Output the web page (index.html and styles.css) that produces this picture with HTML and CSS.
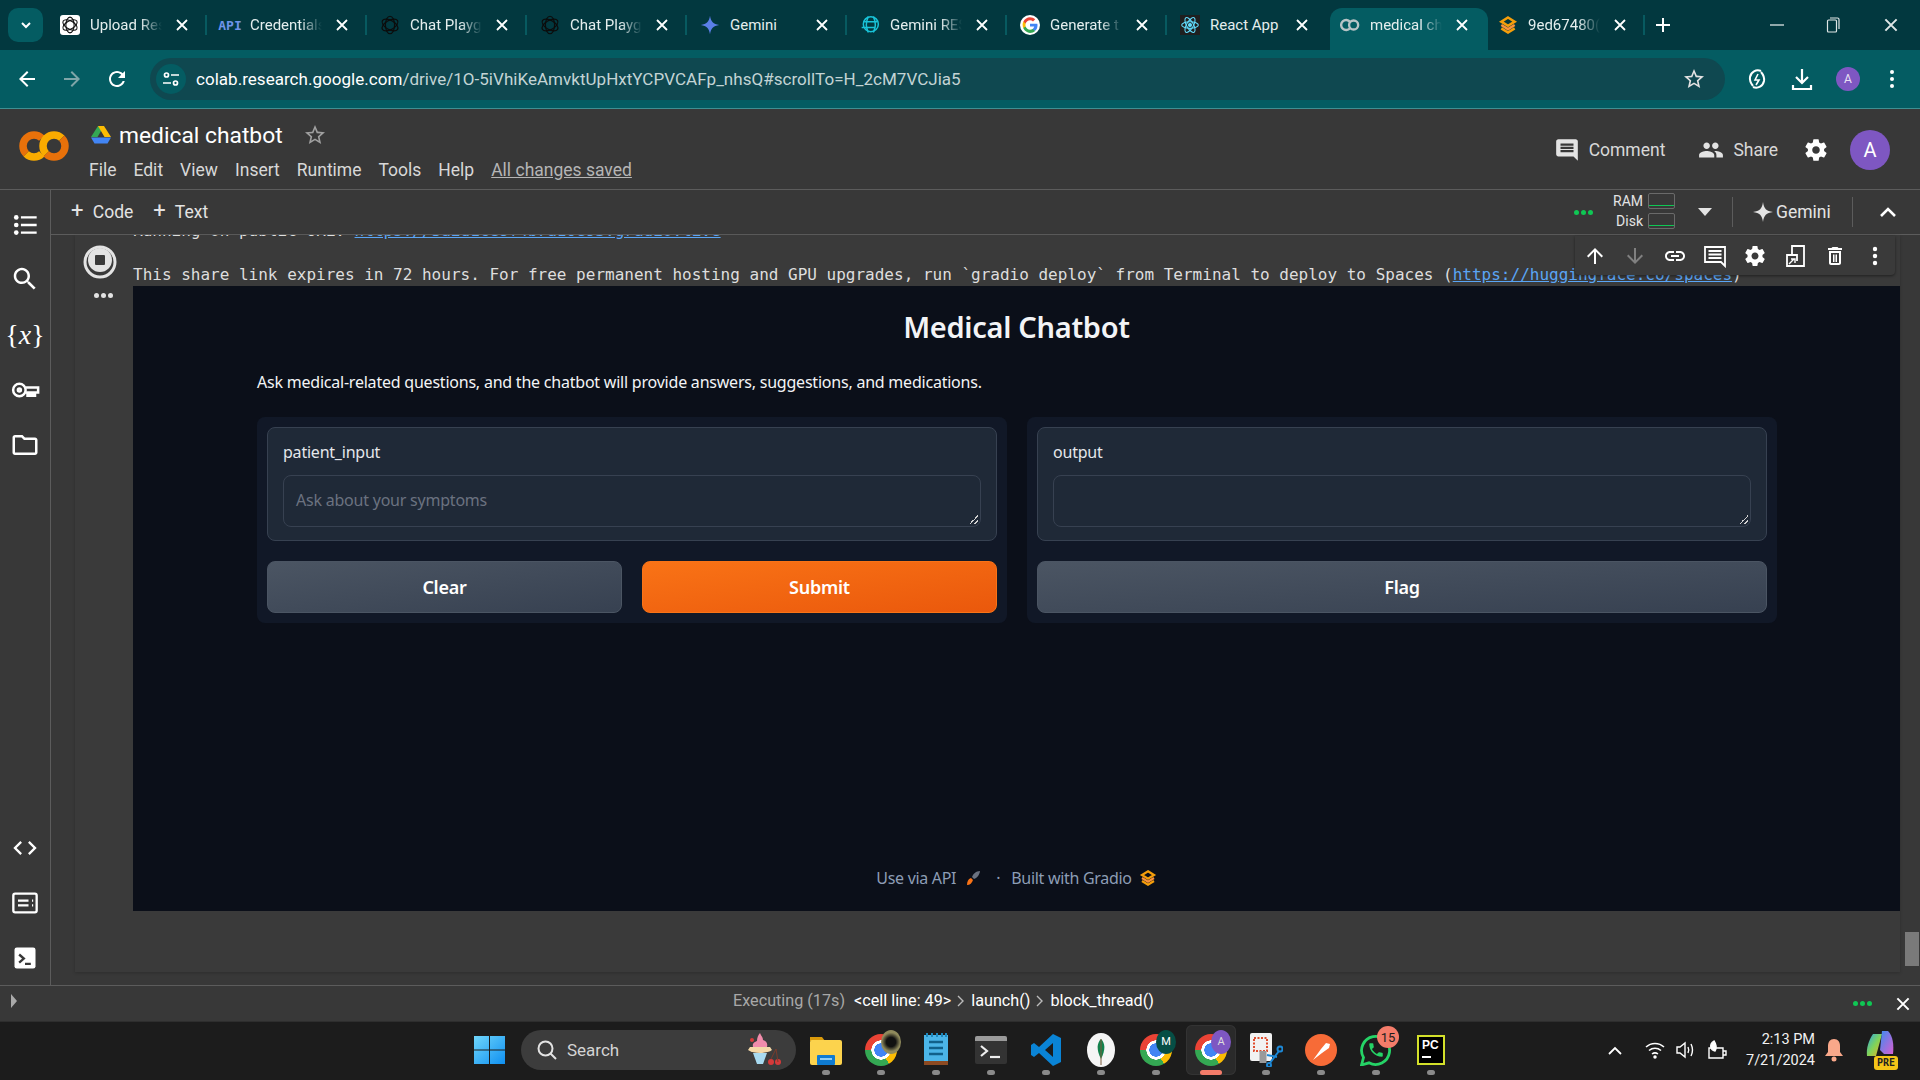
FILE: index.html
```html
<!DOCTYPE html>
<html lang="en">
  <head>
    <meta charset="UTF-8" />
    <title>medical chatbot - Colab</title>
    <link rel="stylesheet" href="styles.css">
  </head>

  <body>
    <!-- shared icons -->
    <svg class="defs" width="0" height="0">
      <defs>
        <symbol id="i-close" viewBox="0 0 16 16"><path d="M3 3l10 10M13 3L3 13" fill="none" stroke="currentColor" stroke-width="1.8"/></symbol>
        <symbol id="i-knot" viewBox="0 0 24 24"><g fill="none" stroke="currentColor" stroke-width="1.4"><ellipse cx="12" cy="12" rx="5.500" ry="10.500"/><ellipse cx="12" cy="12" rx="5.500" ry="10.500" transform="rotate(60 12 12)"/><ellipse cx="12" cy="12" rx="5.500" ry="10.500" transform="rotate(120 12 12)"/></g></symbol>
        <symbol id="i-gradio" viewBox="0 0 24 24"><g fill="none" stroke="#f59e0b" stroke-width="3"><path d="M12 3l8 5-8 5-8-5z"/><path d="M4 12l8 5 8-5" stroke="#fb923c"/><path d="M4 16l8 5 8-5"/></g></symbol>
        <symbol id="i-gear" viewBox="0 0 24 24"><path fill="currentColor" d="M19.43 12.98c.04-.32.07-.64.07-.98s-.03-.66-.07-.98l2.11-1.65c.19-.15.24-.42.12-.64l-2-3.46c-.12-.22-.39-.3-.61-.22l-2.49 1c-.52-.4-1.08-.73-1.69-.98l-.38-2.65C14.46 2.18 14.25 2 14 2h-4c-.25 0-.46.18-.49.42l-.38 2.65c-.61.25-1.17.59-1.69.98l-2.49-1c-.23-.09-.49 0-.61.22l-2 3.46c-.13.22-.07.49.12.64l2.11 1.65c-.04.32-.07.65-.07.98s.03.66.07.98l-2.11 1.65c-.19.15-.24.42-.12.64l2 3.46c.12.22.39.3.61.22l2.49-1c.52.4 1.08.73 1.69.98l.38 2.65c.03.24.24.42.49.42h4c.25 0 .46-.18.49-.42l.38-2.65c.61-.25 1.17-.59 1.69-.98l2.49 1c.23.09.49 0 .61-.22l2-3.46c.12-.22.07-.49-.12-.64l-2.11-1.65zM12 15.5c-1.93 0-3.5-1.57-3.5-3.5s1.57-3.5 3.5-3.5 3.5 1.57 3.5 3.5-1.57 3.5-3.5 3.5z"/></symbol>
        <symbol id="i-star" viewBox="0 0 24 24"><path fill="currentColor" d="M22 9.24l-7.19-.62L12 2 9.19 8.63 2 9.24l5.46 4.73L5.82 21 12 17.27 18.18 21l-1.63-7.03L22 9.24zM12 15.4l-3.76 2.27 1-4.28-3.32-2.88 4.38-.38L12 6.1l1.71 4.04 4.38.38-3.32 2.88 1 4.28L12 15.4z"/></symbol>
      </defs>
    </svg>

    <!-- browser tabs -->
    <div class="tabstrip">
      <button class="tab-search">
        <svg width="14" height="14" viewBox="0 0 14 14"><path d="M3 5l4 4 4-4" fill="none" stroke="#fff" stroke-width="2"/></svg>
      </button>
      <div class="tab">
        <span class="favicon favicon-white"><svg width="18" height="18" class="dark"><use href="#i-knot"/></svg></span>
        <span class="tab-title">Upload Res</span>
        <svg class="tab-close"><use href="#i-close"/></svg>
        <span class="tab-sep"></span>
      </div>
      <div class="tab">
        <span class="favicon favicon-api">API</span>
        <span class="tab-title">Credentials</span>
        <svg class="tab-close"><use href="#i-close"/></svg>
        <span class="tab-sep"></span>
      </div>
      <div class="tab">
        <span class="favicon"><svg width="22" height="22" class="dark"><use href="#i-knot"/></svg></span>
        <span class="tab-title">Chat Playg</span>
        <svg class="tab-close"><use href="#i-close"/></svg>
        <span class="tab-sep"></span>
      </div>
      <div class="tab">
        <span class="favicon"><svg width="22" height="22" class="dark"><use href="#i-knot"/></svg></span>
        <span class="tab-title">Chat Playg</span>
        <svg class="tab-close"><use href="#i-close"/></svg>
        <span class="tab-sep"></span>
      </div>
      <div class="tab">
        <span class="favicon">
          <svg width="20" height="20" viewBox="0 0 24 24"><path d="M12 1c1 7 4 10 11 11-7 1-10 4-11 11-1-7-4-10-11-11 7-1 10-4 11-11z" fill="#5b7fe8"/></svg>
        </span>
        <span class="tab-title tab-title-full">Gemini</span>
        <svg class="tab-close"><use href="#i-close"/></svg>
        <span class="tab-sep"></span>
      </div>
      <div class="tab">
        <span class="favicon">
          <svg width="22" height="22" viewBox="0 0 24 24" fill="none" stroke="#19c3d8" stroke-width="1.8"><circle cx="13" cy="11" r="9"/><path d="M2 15h16M5 8h16M10 2c-3 6-3 13 0 19M16 2c3 6 3 13 0 19"/></svg>
        </span>
        <span class="tab-title">Gemini RES</span>
        <svg class="tab-close"><use href="#i-close"/></svg>
        <span class="tab-sep"></span>
      </div>
      <div class="tab">
        <span class="favicon favicon-google">
          <svg width="18" height="18" viewBox="0 0 24 24"><path fill="#4285f4" d="M22 12.2c0-.7-.1-1.4-.2-2H12v3.900h5.600c-.2 1.300-1 2.400-2.100 3.100v2.600h3.400c2-1.800 3.100-4.500 3.100-7.600z"/><path fill="#34a853" d="M12 22.500c2.800 0 5.200-.9 6.900-2.500l-3.400-2.600c-.9.600-2.100 1-3.500 1-2.700 0-5-1.800-5.800-4.300H3.200v2.700c1.700 3.400 5.100 5.700 8.800 5.700z"/><path fill="#fbbc05" d="M6.200 14.100c-.4-1.300-.4-2.700 0-4V7.400H3.200c-1.400 2.700-1.400 6 0 8.700l3-2z"/><path fill="#ea4335" d="M12 5.800c1.500 0 2.900.5 4 1.600l3-3C17.200 2.600 14.700 1.500 12 1.500c-3.700 0-7.100 2.200-8.800 5.900l3 2.700C7 7.600 9.300 5.800 12 5.800z"/></svg>
        </span>
        <span class="tab-title">Generate t</span>
        <svg class="tab-close"><use href="#i-close"/></svg>
        <span class="tab-sep"></span>
      </div>
      <div class="tab">
        <span class="favicon favicon-react">
          <svg width="20" height="20" viewBox="0 0 24 24" fill="none" stroke="#61dafb" stroke-width="1.3"><ellipse cx="12" cy="12" rx="10" ry="4"/><ellipse cx="12" cy="12" rx="10" ry="4" transform="rotate(60 12 12)"/><ellipse cx="12" cy="12" rx="10" ry="4" transform="rotate(120 12 12)"/><circle cx="12" cy="12" r="1.800" fill="#61dafb"/></svg>
        </span>
        <span class="tab-title tab-title-full">React App</span>
        <svg class="tab-close"><use href="#i-close"/></svg>
      </div>
      <div class="tab tab-active">
        <span class="favicon">
          <svg width="22" height="14" viewBox="0 0 22 14" fill="none" stroke="#b8c4c6" stroke-width="2.600"><path d="M11 3.500a5.500 5.500 0 1 0 0 7"/><circle cx="15" cy="7" r="5"/></svg>
        </span>
        <span class="tab-title">medical ch</span>
        <svg class="tab-close"><use href="#i-close"/></svg>
      </div>
      <div class="tab">
        <span class="favicon"><svg width="20" height="20"><use href="#i-gradio"/></svg></span>
        <span class="tab-title">9ed67480(</span>
        <svg class="tab-close"><use href="#i-close"/></svg>
        <span class="tab-sep"></span>
      </div>
      <svg class="tab-new" width="18" height="18" viewBox="0 0 18 18"><path d="M9 2v14M2 9h14" stroke="#fff" stroke-width="2"/></svg>
      <div class="win-controls">
        <svg width="14" height="14" viewBox="0 0 14 14"><path d="M0 7h14" stroke="#dfe6e6" stroke-width="1.300"/></svg>
        <svg width="14" height="16" viewBox="0 0 14 16" fill="none" stroke="#dfe6e6" stroke-width="1.200"><rect x="1.500" y="3" width="9" height="12" rx="1"/><path d="M4 1h7.500a1.500 1.500 0 0 1 1.500 1.500V12"/></svg>
        <svg width="18" height="18"><use href="#i-close"/></svg>
      </div>
    </div>

    <!-- address bar -->
    <div class="toolbar">
      <svg class="nav-icon" viewBox="0 0 24 24"><path fill="#fff" d="M20 11H7.830l5.590-5.590L12 4l-8 8 8 8 1.410-1.410L7.830 13H20v-2z"/></svg>
      <svg class="nav-icon" viewBox="0 0 24 24"><path fill="#7fa5a8" d="M12 4l-1.410 1.410L16.170 11H4v2h12.170l-5.580 5.590L12 20l8-8z"/></svg>
      <svg class="nav-icon" viewBox="0 0 24 24"><path fill="#fff" d="M17.650 6.350C16.200 4.900 14.210 4 12 4c-4.420 0-7.990 3.580-7.990 8s3.570 8 7.990 8c3.730 0 6.840-2.550 7.730-6h-2.080c-.82 2.330-3.040 4-5.650 4-3.310 0-6-2.690-6-6s2.690-6 6-6c1.660 0 3.140.69 4.220 1.780L13 11h7V4l-2.350 2.350z"/></svg>
      <div class="omnibox">
        <span class="site-info">
          <svg width="18" height="18" viewBox="0 0 18 18" fill="none" stroke="#fff" stroke-width="1.700"><circle cx="4.500" cy="5" r="2"/><path d="M9 5h8M1 13h8"/><circle cx="13.500" cy="13" r="2"/></svg>
        </span>
        <span class="url">colab.research.google.com<span class="url-path">/drive/1O-5iVhiKeAmvktUpHxtYCPVCAFp_nhsQ#scrollTo=H_2cM7VCJia5</span></span>
        <svg class="url-star" width="24" height="24"><use href="#i-star"/></svg>
      </div>
      <div class="toolbar-right">
        <svg width="22" height="24" viewBox="0 0 22 24" fill="none" stroke="#fff" stroke-width="2"><path d="M15 4c-5-2-10 1-11 6-.5 3 .5 6 3 9M7 20c5 2 10-1 11-6 .5-3-.5-6-3-9"/><path d="M12 7l-3 6h4l-3 5" stroke-width="1.600"/></svg>
        <svg width="22" height="24" viewBox="0 0 22 24" fill="none" stroke="#fff" stroke-width="2.200"><path d="M11 2v13M5 10l6 6 6-6M2 18v4h18v-4"/></svg>
        <span class="avatar-small">A</span>
        <svg class="more-vert" width="6" height="20" viewBox="0 0 6 20" fill="#fff"><circle cx="3" cy="3" r="2"/><circle cx="3" cy="10" r="2"/><circle cx="3" cy="17" r="2"/></svg>
      </div>
    </div>

    <!-- colab header -->
    <header class="colab-header">
      <svg class="colab-logo" width="50" height="30" viewBox="0 0 50 30" fill="none" stroke-width="7.500">
        <path d="M22.780 7.220A11 11 0 0 0 7.220 22.780" stroke="#e8710a"/>
        <path d="M7.220 22.780A11 11 0 0 0 22.780 22.780" stroke="#f9ab00"/>
        <path d="M27.220 22.780A11 11 0 0 1 42.780 7.220" stroke="#f9ab00"/>
        <path d="M42.780 7.220A11 11 0 0 1 27.220 22.780" stroke="#e8710a"/>
      </svg>
      <div class="doc-info">
        <div class="doc-title-row">
          <svg width="20" height="18" viewBox="0 0 20 18"><path d="M7 0h6l-6.500 11H0z" fill="#34a853"/><path d="M7 0h6l7 11h-6.500z" fill="#fbbc04"/><path d="M3.500 17.500L0 11.500h20l-3.500 6z" fill="#4285f4"/></svg>
          <span class="doc-title">medical chatbot</span>
          <svg class="doc-star" width="24" height="24"><use href="#i-star"/></svg>
        </div>
        <nav class="menu">
          <a>File</a><a>Edit</a><a>View</a><a>Insert</a><a>Runtime</a><a>Tools</a><a>Help</a>
          <a class="saved">All changes saved</a>
        </nav>
      </div>
      <div class="header-actions">
        <span class="header-btn">
          <svg width="26" height="26" viewBox="0 0 24 24"><path fill="#e3e3e3" d="M21.990 4c0-1.100-.89-2-1.990-2H4c-1.100 0-2 .9-2 2v12c0 1.100.9 2 2 2h14l4 4-.01-18zM18 14H6v-2h12v2zm0-3H6V9h12v2zm0-3H6V6h12v2z"/></svg>
          Comment
        </span>
        <span class="header-btn">
          <svg width="26" height="26" viewBox="0 0 24 24"><path fill="#e3e3e3" d="M16 11c1.660 0 2.990-1.340 2.990-3S17.660 5 16 5c-1.660 0-3 1.340-3 3s1.340 3 3 3zm-8 0c1.660 0 2.990-1.340 2.990-3S9.660 5 8 5C6.340 5 5 6.340 5 8s1.340 3 3 3zm0 2c-2.330 0-7 1.170-7 3.500V19h14v-2.500c0-2.330-4.670-3.500-7-3.500zm8 0c-.29 0-.62.02-.97.05 1.160.84 1.970 1.970 1.970 3.450V19h6v-2.500c0-2.330-4.670-3.500-7-3.500z"/></svg>
          Share
        </span>
        <svg class="header-gear" width="26" height="26"><use href="#i-gear"/></svg>
        <span class="avatar">A</span>
      </div>
    </header>

    <div class="workspace">
      <!-- left sidebar -->
      <aside class="sidebar">
        <div class="side-group">
          <svg width="28" height="28" viewBox="0 0 24 24" fill="#fff"><circle cx="4.500" cy="5.500" r="2"/><circle cx="4.500" cy="12" r="2"/><circle cx="4.500" cy="18.500" r="2"/><path d="M8.500 4.500H22v2H8.500zM8.500 11H22v2H8.500zM8.500 17.500H22v2H8.500z"/></svg>
          <svg width="30" height="30" viewBox="0 0 24 24"><path fill="#fff" d="M15.500 14h-.79l-.28-.27C15.410 12.590 16 11.110 16 9.500 16 5.910 13.090 3 9.500 3S3 5.910 3 9.500 5.910 16 9.500 16c1.610 0 3.090-.59 4.230-1.570l.27.28v.79l5 4.990L20.490 19l-4.990-5zm-6 0C7.010 14 5 11.990 5 9.500S7.010 5 9.500 5 14 7.010 14 9.500 11.990 14 9.500 14z"/></svg>
          <span class="side-vars">{<i>x</i>}</span>
          <svg width="30" height="30" viewBox="0 0 24 24" fill="none" stroke="#fff" stroke-width="2"><circle cx="7.500" cy="12" r="5"/><circle cx="7.500" cy="12" r="1.200"/><path d="M12.500 10H22.500v4H20v2.500h-2V14h-2v2.500h-2V14h-1.500"/></svg>
          <svg width="30" height="30" viewBox="0 0 24 24"><path fill="#fff" d="M20 6h-8l-2-2H4c-1.100 0-1.990.9-1.990 2L2 18c0 1.100.9 2 2 2h16c1.100 0 2-.9 2-2V8c0-1.100-.9-2-2-2zm0 12H4V6h5.170l2 2H20v10z"/></svg>
        </div>
        <div class="side-group side-bottom">
          <svg width="28" height="28" viewBox="0 0 24 24"><path fill="#fff" d="M9.400 16.600L4.800 12l4.600-4.600L8 6l-6 6 6 6 1.400-1.400zm5.200 0l4.600-4.600-4.600-4.600L16 6l6 6-6 6-1.400-1.400z"/></svg>
          <svg width="28" height="28" viewBox="0 0 24 24" fill="none" stroke="#fff" stroke-width="2"><rect x="2" y="4" width="20" height="16" rx="1.500"/><path d="M6 10h9M6 14h9M18 10h1M18 14h1"/></svg>
          <svg width="28" height="28" viewBox="0 0 24 24"><rect x="3" y="3" width="18" height="18" rx="2" fill="#fff"/><path d="M7 9l4 3.500L7 16M12 17h5" fill="none" stroke="#383838" stroke-width="2"/></svg>
        </div>
      </aside>

      <main class="notebook-area">
        <!-- + Code / + Text -->
        <div class="nb-toolbar">
          <span class="add-btn"><b>+</b> Code</span>
          <span class="add-btn"><b>+</b> Text</span>
          <div class="nb-status">
            <span class="dots-green"><i></i><i></i><i></i></span>
            <div class="res-meters">
              <div class="meter-row"><span>RAM</span><span class="meter"><em></em></span></div>
              <div class="meter-row"><span>Disk</span><span class="meter"><em></em></span></div>
            </div>
            <svg class="caret" width="14" height="8" viewBox="0 0 14 8"><path d="M0 0h14L7 8z" fill="#e3e3e3"/></svg>
            <span class="bar-sep"></span>
            <span class="gemini-btn">
              <svg width="20" height="20" viewBox="0 0 24 24"><path d="M12 0c1 8 4 11 12 12-8 1-11 4-12 12-1-8-4-11-12-12 8-1 11-4 12-12z" fill="#e3e3e3"/></svg>
              Gemini
            </span>
            <span class="bar-sep"></span>
            <svg class="chev-up" width="18" height="12" viewBox="0 0 18 12"><path d="M2 10l7-7 7 7" fill="none" stroke="#fff" stroke-width="2.600"/></svg>
          </div>
        </div>

        <div class="notebook">
          <div class="cell">
            <div class="cell-gutter">
              <svg width="34" height="34" viewBox="0 0 34 34"><circle cx="17" cy="17" r="15" fill="none" stroke="#e3e3e3" stroke-width="3"/><circle cx="17" cy="15" r="12" fill="#e3e3e3"/><rect x="12" y="10" width="10" height="10" rx="1" fill="#3a3a3a"/></svg>
              <span class="cell-more"><i></i><i></i><i></i></span>
            </div>
            <div class="cell-output">
              <pre class="out-text">Running on public URL: <a>https://5a2d1ce8f4b7a10e93.gradio.live</a>

This share link expires in 72 hours. For free permanent hosting and GPU upgrades, run `gradio deploy` from Terminal to deploy to Spaces (<a>https://huggingface.co/spaces</a>)</pre>

              <!-- gradio app -->
              <div class="gradio">
                <h1 class="gr-title">Medical Chatbot</h1>
                <p class="gr-desc">Ask medical-related questions, and the chatbot will provide answers, suggestions, and medications.</p>
                <div class="gr-row">
                  <section class="gr-panel">
                    <div class="gr-field">
                      <label class="gr-label">patient_input</label>
                      <div class="gr-textbox gr-placeholder">Ask about your symptoms<span class="grip"></span></div>
                    </div>
                    <div class="gr-buttons">
                      <button class="gr-btn">Clear</button>
                      <button class="gr-btn gr-btn-primary">Submit</button>
                    </div>
                  </section>
                  <section class="gr-panel">
                    <div class="gr-field">
                      <label class="gr-label">output</label>
                      <div class="gr-textbox"><span class="grip"></span></div>
                    </div>
                    <div class="gr-buttons">
                      <button class="gr-btn">Flag</button>
                    </div>
                  </section>
                </div>
                <footer class="gr-footer">
                  <span>Use via API</span>
                  <svg width="16" height="16" viewBox="0 0 16 16"><path d="M2 15c0-3 1-6 4-7l2 2c-1 3-3 5-6 5z" fill="#f97316"/><path d="M7 7c1-3 4-6 8-6-.5 4-3 7-6 8z" fill="#6b7280"/></svg>
                  <span class="gr-dot">·</span>
                  <span>Built with Gradio</span>
                  <svg class="gr-logo" width="18" height="18"><use href="#i-gradio"/></svg>
                </footer>
              </div>
            </div>
          </div>
          <div class="scrollbar"><span class="scroll-thumb"></span></div>

          <!-- cell actions, floats over the output -->
          <div class="cell-actions">
            <svg viewBox="0 0 24 24"><path fill="#fff" d="M4 12l1.410 1.410L11 7.830V20h2V7.830l5.580 5.590L20 12l-8-8z"/></svg>
            <svg viewBox="0 0 24 24"><path fill="#808080" d="M20 12l-1.410-1.410L13 16.170V4h-2v12.170l-5.580-5.590L4 12l8 8z"/></svg>
            <svg viewBox="0 0 24 24"><path fill="#fff" d="M3.900 12c0-1.710 1.390-3.100 3.100-3.100h4V7H7c-2.760 0-5 2.240-5 5s2.240 5 5 5h4v-1.900H7c-1.710 0-3.100-1.390-3.100-3.100zM8 13h8v-2H8v2zm9-6h-4v1.900h4c1.710 0 3.100 1.390 3.100 3.100s-1.390 3.100-3.100 3.100h-4V17h4c2.760 0 5-2.240 5-5s-2.240-5-5-5z"/></svg>
            <svg viewBox="0 0 24 24" fill="none" stroke="#fff" stroke-width="1.800"><path d="M2 3h20v19l-4-4H2z"/><path d="M5.500 7h13M5.500 10.500h13M5.500 14h13"/></svg>
            <svg class="white"><use href="#i-gear"/></svg>
            <svg viewBox="0 0 24 24" fill="none" stroke="#fff" stroke-width="1.800"><path d="M9 11V2h12v20H4V11h10v6"/><path d="M6 20l5-5M8 15h4v4" stroke-width="1.400"/></svg>
            <svg viewBox="0 0 24 24"><path fill="#fff" d="M6 19c0 1.100.9 2 2 2h8c1.100 0 2-.9 2-2V7H6v12zM8 9h8v10H8V9zm2 1.500h1.500V18H10zm2.500 0H14V18h-1.500zM15.500 4l-1-1h-5l-1 1H5v2h14V4z"/></svg>
            <svg viewBox="0 0 24 24" fill="#fff"><circle cx="12" cy="5" r="2.200"/><circle cx="12" cy="12" r="2.200"/><circle cx="12" cy="19" r="2.200"/></svg>
          </div>
        </div>
      </main>
    </div>

    <!-- execution status -->
    <div class="statusbar">
      <svg class="status-arrow" width="8" height="14" viewBox="0 0 8 14"><path d="M1 0l6 7-6 7z" fill="#aaa"/></svg>
      <div class="status-text">
        <span class="status-muted">Executing (17s)</span>
        <span>&lt;cell line: 49&gt;</span>
        <svg width="8" height="12" viewBox="0 0 8 12"><path d="M1 1l5 5-5 5" fill="none" stroke="#bbb" stroke-width="1.400"/></svg>
        <span>launch()</span>
        <svg width="8" height="12" viewBox="0 0 8 12"><path d="M1 1l5 5-5 5" fill="none" stroke="#bbb" stroke-width="1.400"/></svg>
        <span>block_thread()</span>
      </div>
      <span class="dots-green status-dots"><i></i><i></i><i></i></span>
      <svg class="status-close" width="18" height="18"><use href="#i-close"/></svg>
    </div>

    <!-- windows taskbar -->
    <div class="taskbar">
      <svg class="start" width="31" height="30" viewBox="0 0 31 30">
        <defs><linearGradient id="win" x1="0" y1="0" x2="1" y2="1"><stop offset="0" stop-color="#6fd6fb"/><stop offset="1" stop-color="#0f8ff0"/></linearGradient></defs>
        <path d="M0 1h15v13.500H0zM16 1h15v13.500H16zM0 15.500h15V29H0zM16 15.500h15V29H16z" fill="url(#win)"/>
      </svg>
      <div class="task-search">
        <svg width="22" height="22" viewBox="0 0 22 22" fill="none" stroke="#e3e3e3" stroke-width="2"><circle cx="9.500" cy="9.500" r="7"/><path d="M14.500 14.500l5.500 5.500"/></svg>
        <span>Search</span>
        <svg class="cupcake" width="36" height="36" viewBox="0 0 36 36">
          <path d="M8 21l4 11h6l4-11z" fill="#a8daf0"/>
          <path d="M3 18c5 4 19 4 24 0l-2-3H5z" fill="#f5d9a8"/>
          <path d="M8 15c-1-4 2-5 4-6 0-3 1-6 3-8 1 3 3 4 3 7 3 1 5 3 4 7z" fill="#f08cab"/>
          <circle cx="7" cy="8" r="2" fill="#d63a3a"/>
          <circle cx="26" cy="30" r="3" fill="#d63a3a"/><circle cx="33" cy="30" r="3" fill="#d63a3a"/>
          <path d="M26 27l5-10 2 13" fill="none" stroke="#7a3b2b"/>
        </svg>
      </div>
      <div class="task-apps">
        <span class="task-app">
          <svg width="32" height="32" viewBox="0 0 32 32"><path d="M0 3h12l3 4h-15z" fill="#d99a0b"/><rect y="6" width="32" height="25" rx="2" fill="#fcd34d"/><rect x="7" y="21" width="18" height="10" rx="1" fill="#0f7bd1"/><rect x="10" y="24" width="12" height="2" fill="#8ecdf7"/></svg>
          <i></i>
        </span>
        <span class="task-app">
          <span class="chrome"><span class="chrome-badge badge-photo"></span></span>
          <i></i>
        </span>
        <span class="task-app">
          <svg width="24" height="36" viewBox="0 0 24 36"><rect y="3" width="24" height="29" fill="#4bb5e8"/><rect y="29" width="24" height="4" fill="#8c4a22"/><path d="M5 10h14M5 16h14M5 22h14" stroke="#11608a" stroke-width="2.500"/><path d="M3 1v4M8 1v4M13 1v4M18 1v4M22 1v4" stroke="#1d88bd" stroke-width="2"/></svg>
          <i></i>
        </span>
        <span class="task-app">
          <svg width="32" height="28" viewBox="0 0 32 28"><rect width="32" height="28" rx="2" fill="#333"/><path d="M0 2a2 2 0 0 1 2-2h28a2 2 0 0 1 2 2v3H0z" fill="#9a9a9a"/><path d="M6 10l6 5-6 5" fill="none" stroke="#eee" stroke-width="2.200"/><path d="M15 21h10" stroke="#eee" stroke-width="2.200"/></svg>
          <i></i>
        </span>
        <span class="task-app">
          <svg width="30" height="32" viewBox="0 0 30 32"><path d="M22 0l8 4v24l-8 4-14-13-5 4-3-2v-10l3-2 5 4zM22 9l-8 7 8 7z" fill="#0a84d6"/></svg>
          <i></i>
        </span>
        <span class="task-app">
          <svg width="30" height="34" viewBox="0 0 30 34"><ellipse cx="15" cy="17" rx="14" ry="17" fill="#f5f5f5"/><path d="M15 6c4 4 5 10 0 20-5-10-4-16 0-20z" fill="#13814c"/><path d="M15 6v26" stroke="#7a5b3a"/></svg>
          <i></i>
        </span>
        <span class="task-app">
          <span class="chrome"><span class="chrome-badge badge-m">M</span></span>
          <i></i>
        </span>
        <span class="task-app task-app-active">
          <span class="chrome"><span class="chrome-badge badge-a">A</span></span>
          <i></i>
        </span>
        <span class="task-app">
          <svg width="34" height="34" viewBox="0 0 34 34"><rect x="1" width="22" height="28" rx="2" fill="#f2f2f2"/><rect x="5" y="5" width="13" height="13" fill="none" stroke="#e04e2f" stroke-width="2" stroke-dasharray="2 1.500"/><path d="M14 18v12" stroke="#9a9a9a" stroke-width="7"/><circle cx="31" cy="16" r="2.500" fill="none" stroke="#1d88d6" stroke-width="2"/><circle cx="20" cy="32" r="2" fill="none" stroke="#1d88d6" stroke-width="2"/><path d="M30 18l-9 12M18 22l10 2" stroke="#1d88d6" stroke-width="2"/></svg>
          <i></i>
        </span>
        <span class="task-app">
          <svg width="32" height="32" viewBox="0 0 32 32"><circle cx="16" cy="16" r="16" fill="#f76b37"/><path d="M8 26l8-11 5-6 4 1-1 4-7 5z" fill="#fff"/></svg>
          <i></i>
        </span>
        <span class="task-app">
          <svg width="32" height="32" viewBox="0 0 32 32"><path d="M1.500 31l2-7.500A14 14 0 1 1 9 28.800z" fill="none" stroke="#25d366" stroke-width="2.800"/><g transform="translate(7 7) scale(.75)"><path fill="#25d366" d="M6.620 10.790c1.440 2.830 3.760 5.140 6.590 6.590l2.200-2.200c.27-.27.67-.36 1.020-.24 1.120.37 2.330.57 3.570.57.55 0 1 .45 1 1V20c0 .55-.45 1-1 1-9.390 0-17-7.610-17-17 0-.55.45-1 1-1h3.500c.55 0 1 .45 1 1 0 1.250.2 2.450.57 3.570.11.350.03.74-.25 1.020l-2.200 2.200z"/></g></svg>
          <span class="wa-badge">15</span>
          <i></i>
        </span>
        <span class="task-app">
          <span class="pycharm">PC<u></u></span>
          <i></i>
        </span>
      </div>
      <div class="tray">
        <svg class="tray-chev" width="16" height="10" viewBox="0 0 16 10"><path d="M2 9l6-6 6 6" fill="none" stroke="#fff" stroke-width="1.800"/></svg>
        <svg width="20" height="18" viewBox="0 0 20 18" fill="none" stroke="#fff" stroke-width="1.500"><path d="M1 6a13 13 0 0 1 18 0M4 9.500a9 9 0 0 1 12 0M7 13a5 5 0 0 1 6 0"/><circle cx="10" cy="16" r="1" fill="#fff"/></svg>
        <svg width="20" height="20" viewBox="0 0 20 20" fill="none" stroke="#fff" stroke-width="1.400"><path d="M2 7v6h3l5 4V3L5 7z"/><path d="M13 7c1 2 1 4 0 6M16 4c2 4 2 8 0 12"/></svg>
        <svg width="22" height="20" viewBox="0 0 22 20" fill="none" stroke="#fff" stroke-width="1.400"><path d="M4 8h14v10H4zM18 11h3v4h-3"/><path d="M9 1c-5 3-4 9 1 10 2-3 1-7-1-10z" fill="#fff"/></svg>
        <div class="clock"><span>2:13 PM</span><span>7/21/2024</span></div>
        <svg width="18" height="24" viewBox="0 0 18 24"><path d="M9 1c-4 0-6 3-6 7v6l-3 4h18l-3-4V8c0-4-2-7-6-7z" fill="#f9a88a"/><circle cx="9" cy="21" r="2.500" fill="#f9a88a"/></svg>
        <span class="copilot">
          <svg width="32" height="32" viewBox="0 0 32 32"><defs><linearGradient id="cop" x1="0" y1="0" x2="1" y2="1"><stop offset="0" stop-color="#2aa7e8"/><stop offset=".5" stop-color="#7fd35a"/><stop offset="1" stop-color="#f0b21e"/></linearGradient><linearGradient id="cop2" x1="0" y1="0" x2="1" y2="1"><stop offset="0" stop-color="#3b8cf0"/><stop offset="1" stop-color="#d85fd2"/></linearGradient></defs><path d="M9 4h9l-6 22H3c-1-8 2-16 6-22z" fill="url(#cop)"/><path d="M18 1h6c5 5 6 14 5 23h-9l-4-4z" fill="url(#cop2)"/></svg>
          <span class="pre">PRE</span>
        </span>
      </div>
    </div>
  </body>
</html>
```

FILE: styles.css
```css
* {
  box-sizing: border-box;
}

body {
  margin: 0;
  width: 1920px;
  height: 1080px;
  overflow: hidden;
  display: flex;
  flex-direction: column;
  background-color: #383838;
  font-family: Roboto, "Liberation Sans", sans-serif;
  color: #e3e3e3;
}

.defs {
  position: absolute;
}

.dark {
  color: #0c0c0c;
}

/* browser tabs */
.tabstrip {
  height: 50px;
  flex: none;
  display: flex;
  align-items: flex-start;
  padding: 8px 0 0 8px;
  background-color: #02383f;
}

.tab-search {
  width: 35px;
  height: 34px;
  margin-right: 7px;
  border: none;
  border-radius: 10px;
  background-color: #045c62;
  display: flex;
  align-items: center;
  justify-content: center;
}

.tab {
  width: 160px;
  height: 42px;
  padding: 0 0 8px 10px;
  display: flex;
  align-items: center;
  font-size: 15px;
  color: #e4eeee;
}

.tab-active {
  width: 158px;
  background-color: #045c62;
  border-radius: 12px 12px 0 0;
}

.favicon {
  width: 20px;
  height: 20px;
  flex: none;
  margin-right: 10px;
  display: flex;
  align-items: center;
  justify-content: center;
}

.favicon-white {
  background-color: #fff;
  border-radius: 3px;
}

.favicon-api {
  font-family: "DejaVu Sans Mono", monospace;
  font-size: 13px;
  font-weight: 700;
  color: #6f93e8;
}

.favicon-google {
  background-color: #fff;
  border-radius: 50%;
}

.favicon-react {
  background-color: #1f1f1f;
}

.tab-title {
  width: 72px;
  flex: none;
  white-space: nowrap;
  -webkit-mask-image: linear-gradient(to right, #000 70%, transparent);
  mask-image: linear-gradient(to right, #000 70%, transparent);
}

.tab-title-full {
  -webkit-mask-image: none;
  mask-image: none;
}

.tab-close {
  width: 16px;
  height: 16px;
  margin-left: 12px;
  flex: none;
  color: #fff;
}

.tab-sep {
  width: 2px;
  height: 20px;
  margin-left: 15px;
  background-color: #075a60;
}

.tab-new {
  margin: 8px 0 0 6px;
}

.win-controls {
  margin-left: auto;
  width: 150px;
  padding-right: 20px;
  height: 34px;
  display: flex;
  align-items: center;
  justify-content: space-between;
  color: #dfe6e6;
}

/* address bar */
.toolbar {
  height: 59px;
  flex: none;
  display: flex;
  align-items: center;
  padding: 0 0 1px 15px;
  gap: 21px;
  background-color: #045c62;
  border-bottom: 1px solid #3f8f92;
}

.nav-icon {
  width: 24px;
  height: 24px;
  flex: none;
}

.omnibox {
  width: 1575px;
  height: 42px;
  padding: 0 19px 0 6px;
  flex: none;
  display: flex;
  align-items: center;
  border-radius: 21px;
  background-color: #0f4850;
}

.site-info {
  width: 30px;
  height: 30px;
  border-radius: 50%;
  background-color: #045c62;
  display: flex;
  align-items: center;
  justify-content: center;
}

.url {
  margin-left: 10px;
  font-size: 17px;
  letter-spacing: 0.03px;
  color: #fff;
  white-space: nowrap;
}

.url-path {
  color: #c3d4d5;
}

.url-star {
  margin-left: auto;
  color: #e3e3e3;
}

.toolbar-right {
  display: flex;
  align-items: center;
  gap: 23px;
}

.more-vert {
  margin-left: 6px;
}

.avatar-small {
  width: 24px;
  height: 24px;
  border-radius: 50%;
  background-color: #7e57c2;
  font-size: 12px;
  color: #e8e0f4;
  display: flex;
  align-items: center;
  justify-content: center;
}

/* colab header */
.colab-header {
  height: 81px;
  flex: none;
  display: flex;
  padding-left: 19px;
  border-bottom: 1px solid #5c5c5c;
}

.colab-logo {
  margin-top: 22px;
  flex: none;
}

.doc-info {
  margin-left: 20px;
}

.doc-title-row {
  display: flex;
  align-items: center;
  height: 24px;
  margin-top: 14px;
  margin-left: 2px;
}

.doc-title {
  margin-left: 8px;
  font-size: 22.8px;
  color: #fff;
}

.doc-star {
  margin-left: 20px;
  color: #a0a0a0;
}

.menu {
  display: flex;
  gap: 17px;
  margin-top: 13px;
  font-size: 17.5px;
  color: #d8d8d8;
}

.saved {
  text-decoration: underline;
  color: #b5b5b5;
}

.header-actions {
  margin-left: auto;
  padding: 2px 30px 0 0;
  display: flex;
  align-items: center;
  height: 80px;
}

.header-btn {
  display: flex;
  align-items: center;
  gap: 9px;
  margin-right: 30px;
  font-size: 17.5px;
  color: #d8d8d8;
}

.header-btn:first-child {
  margin-right: 33px;
}

.header-gear {
  color: #fff;
  margin-left: -5px;
  margin-right: 21px;
}

.avatar {
  width: 40px;
  height: 40px;
  border-radius: 50%;
  background-color: #7e57c2;
  color: #fff;
  font-size: 20px;
  display: flex;
  align-items: center;
  justify-content: center;
}

/* main area */
.workspace {
  flex: 1;
  min-height: 0;
  display: flex;
}

.sidebar {
  width: 51px;
  flex: none;
  padding: 21px 0 13px;
  display: flex;
  flex-direction: column;
  justify-content: space-between;
  align-items: center;
  border-right: 1px solid #5c5c5c;
}

.side-group {
  display: flex;
  flex-direction: column;
  align-items: center;
  height: 249px;
  justify-content: space-between;
}

.side-bottom {
  height: 138px;
}

.side-vars {
  font-family: "Liberation Serif", serif;
  font-size: 28px;
  line-height: 30px;
  color: #fff;
}

.notebook-area {
  flex: 1;
  min-width: 0;
  display: flex;
  flex-direction: column;
}

.nb-toolbar {
  height: 45px;
  flex: none;
  padding-left: 20px;
  display: flex;
  align-items: center;
  gap: 20px;
  border-bottom: 1px solid #5c5c5c;
}

.add-btn {
  font-size: 17.5px;
  color: #e3e3e3;
  margin-bottom: 1px;
}

.add-btn b {
  font-weight: 400;
  font-size: 22px;
  line-height: 18px;
  margin-right: 5px;
}

.nb-status {
  margin-left: auto;
  display: flex;
  align-items: center;
  height: 100%;
}

.dots-green {
  display: flex;
  gap: 2px;
}

.dots-green i {
  width: 5px;
  height: 5px;
  border-radius: 50%;
  background-color: #0fc754;
}

.res-meters {
  margin-left: 20px;
  margin-bottom: 2px;
  font-size: 14px;
  line-height: 16px;
}

.meter-row {
  display: flex;
  justify-content: flex-end;
  align-items: center;
  gap: 5px;
  height: 20px;
}

.meter {
  width: 27px;
  height: 16px;
  border: 1px solid #6a6a6a;
  border-radius: 2px;
  position: relative;
}

.meter em {
  position: absolute;
  left: 0;
  right: 0;
  bottom: 2px;
  height: 1px;
  background-color: #0fc754;
}

.caret {
  margin-left: 23px;
}

.bar-sep {
  width: 1px;
  height: 30px;
  background-color: #5c5c5c;
}

.caret + .bar-sep {
  margin-left: 20px;
}

.gemini-btn {
  display: flex;
  align-items: center;
  gap: 3px;
  width: 119px;
  padding-left: 20px;
  font-size: 17.5px;
}

.chev-up {
  margin: 0 23px 0 26px;
}

.notebook {
  flex: 1;
  min-height: 0;
  display: flex;
  position: relative;
  padding-left: 24px;
}

.cell {
  width: 1825px;
  height: 737px;
  flex: none;
  display: flex;
  background-color: #3a3a3a;
  box-shadow: 0 1px 3px rgba(0, 0, 0, 0.2);
  overflow: hidden;
}

.cell-gutter {
  width: 58px;
  flex: none;
  padding: 10px 8px 0 0;
  display: flex;
  flex-direction: column;
  align-items: center;
}

.cell-more {
  display: flex;
  gap: 2px;
  margin: 14px 0 0 6px;
}

.cell-more i {
  width: 5px;
  height: 5px;
  border-radius: 50%;
  background-color: #e3e3e3;
}

.cell-output {
  flex: 1;
  min-width: 0;
}

.out-text {
  margin: -15px 0 0;
  font-family: "DejaVu Sans Mono", monospace;
  font-size: 16px;
  line-height: 22px;
  color: #dedede;
  white-space: pre;
}

.out-text a {
  color: #5aa5f5;
  text-decoration: underline;
}

/* gradio app */
.gradio {
  height: 625px;
  padding: 22px 124px 0;
  display: flex;
  flex-direction: column;
  background-color: #0b0f19;
  font-family: "Noto Sans", "Open Sans", sans-serif;
}

.gr-title {
  margin: 0;
  text-align: center;
  font-size: 29px;
  line-height: 38px;
  font-weight: 600;
  letter-spacing: -0.3px;
  color: #f3f4f6;
}

.gr-desc {
  margin: 24px 0 23px;
  font-size: 16px;
  line-height: 24px;
  letter-spacing: -0.22px;
  color: #f3f4f6;
}

.gr-row {
  display: grid;
  grid-template-columns: 750px 750px;
  gap: 20px;
}

.gr-panel {
  padding: 10px;
  border-radius: 8px;
  background-color: #111827;
}

.gr-field {
  height: 114px;
  padding: 12px 15px;
  border: 1px solid #374151;
  border-radius: 8px;
  background-color: #1f2937;
}

.gr-label {
  display: block;
  height: 35px;
  font-size: 16px;
  line-height: 24px;
  letter-spacing: -0.22px;
  color: #e5e7eb;
}

.gr-textbox {
  position: relative;
  height: 52px;
  padding: 0 12px;
  border: 1px solid #374151;
  border-radius: 8px;
  font-size: 16px;
  line-height: 48px;
  letter-spacing: -0.22px;
}

.gr-placeholder {
  color: #6b7280;
}

.grip {
  position: absolute;
  right: 2px;
  bottom: 2px;
  width: 9px;
  height: 9px;
  background: linear-gradient(135deg, transparent 50%, #d0d0d0 50%, #d0d0d0 60%, transparent 60%, transparent 75%, #d0d0d0 75%, #d0d0d0 85%, transparent 85%);
}

.gr-buttons {
  display: flex;
  gap: 20px;
  margin-top: 20px;
}

.gr-btn {
  flex: 1;
  height: 52px;
  border: 1px solid #4b5563;
  border-radius: 8px;
  background: linear-gradient(to bottom right, #4b5563, #374151);
  color: #fff;
  font-family: inherit;
  font-size: 18px;
  font-weight: 600;
  letter-spacing: -0.25px;
}

.gr-btn-primary {
  border-color: #f97316;
  background: linear-gradient(to bottom right, #f97316, #ea580c);
}

.gr-footer {
  margin-top: auto;
  padding-bottom: 22px;
  display: flex;
  justify-content: center;
  align-items: center;
  gap: 9px;
  font-size: 16px;
  letter-spacing: -0.3px;
  color: #8d9db5;
}

.gr-dot {
  margin: 0 2px 0 6px;
}

.gr-logo {
  margin-left: -2px;
}

.scrollbar {
  position: relative;
  flex: 1;
}

.scroll-thumb {
  position: absolute;
  top: 697px;
  left: 5px;
  width: 14px;
  height: 34px;
  background-color: #7a7a7a;
}

.cell-actions {
  position: absolute;
  top: 1px;
  left: 1524px;
  width: 320px;
  height: 39px;
  display: flex;
  align-items: center;
  justify-content: space-between;
  padding: 0 8px;
  background-color: #3a3a3a;
  border-radius: 0 0 4px 4px;
  box-shadow: 0 1px 3px rgba(0, 0, 0, 0.45);
}

.cell-actions svg {
  width: 24px;
  height: 24px;
}

.cell-actions .white {
  color: #fff;
}

/* status bar */
.statusbar {
  height: 36px;
  flex: none;
  display: flex;
  align-items: center;
  position: relative;
  padding: 0 8px 0 10px;
  border-top: 1px solid #5c5c5c;
  font-size: 16.2px;
}

.status-arrow {
  margin-bottom: 6px;
}

.status-text {
  position: absolute;
  left: 733px;
  top: 5px;
  display: flex;
  align-items: center;
  gap: 6px;
  color: #fff;
}

.status-muted {
  color: #a8a8a8;
  margin-right: 3px;
}

.status-dots {
  margin-left: auto;
  margin-right: 22px;
}

.status-close {
  color: #fff;
}

/* windows taskbar */
.taskbar {
  height: 59px;
  flex: none;
  display: flex;
  align-items: center;
  padding: 0 0 2px 474px;
  background-color: #1c1c1c;
  border-top: 1px solid #2e2e2e;
}

.start {
  flex: none;
}

.task-search {
  width: 275px;
  height: 40px;
  margin-left: 16px;
  padding: 0 15px;
  flex: none;
  display: flex;
  align-items: center;
  gap: 9px;
  border-radius: 20px;
  background-color: #3c3c3c;
  font-size: 17px;
  color: #d4d4d4;
}

.cupcake {
  margin-left: auto;
}

.task-apps {
  display: flex;
  margin-left: 5px;
}

.task-app {
  width: 50px;
  height: 50px;
  margin-right: 5px;
  position: relative;
  display: flex;
  align-items: center;
  justify-content: center;
  padding-bottom: 1px;
  border-radius: 6px;
}

.task-app > i {
  position: absolute;
  left: 21px;
  bottom: 0;
  width: 8px;
  height: 5px;
  border-radius: 3px;
  background-color: #8a8a8a;
}

.task-app-active {
  background-color: #2a2a2a;
  box-shadow: inset 0 0 0 1px #333;
}

.task-app-active > i {
  left: 14px;
  width: 22px;
  background-color: #f47c6a;
}

.chrome {
  width: 32px;
  height: 32px;
  position: relative;
  border-radius: 50%;
  background:
    radial-gradient(circle, #4285f4 0 29%, #fff 30% 42%, transparent 43%),
    conic-gradient(from 30deg, #fbbc04 0 120deg, #34a853 120deg 240deg, #ea4335 240deg 360deg);
}

.chrome-badge {
  position: absolute;
  top: -4px;
  right: -4px;
  width: 20px;
  height: 24px;
  border-radius: 50%;
  font-size: 11px;
  display: flex;
  align-items: center;
  justify-content: center;
  color: #fff;
}

.badge-photo {
  background: radial-gradient(circle, #111 30%, #8f8a5c 60%);
}

.badge-m {
  background-color: #064e45;
}

.badge-a {
  background-color: #7e57c2;
  color: #ddd;
}

.wa-badge {
  position: absolute;
  top: 1px;
  right: 2px;
  width: 22px;
  height: 22px;
  border-radius: 50%;
  background-color: #f47c6a;
  color: #1c1c1c;
  font-size: 13px;
  display: flex;
  align-items: center;
  justify-content: center;
}

.pycharm {
  width: 28px;
  height: 30px;
  padding: 2px 0 0 3px;
  background-color: #000;
  border: 2px solid #d3e02a;
  font-family: "Liberation Sans", sans-serif;
  font-size: 12px;
  font-weight: 700;
  line-height: 13px;
  color: #fff;
  display: block;
}

.pycharm u {
  display: block;
  width: 9px;
  height: 2px;
  margin-top: 4px;
  background-color: #fff;
}

.tray {
  margin-left: 146px;
  display: flex;
  align-items: center;
  gap: 10px;
  color: #fff;
}

.tray-chev {
  margin-right: 12px;
}

.clock {
  width: 80px;
  margin-left: -2px;
  display: flex;
  flex-direction: column;
  align-items: flex-end;
  gap: 4px;
  font-size: 14.5px;
  line-height: 17px;
  color: #f2f2f2;
}

.copilot {
  position: relative;
  margin-left: 11px;
  height: 40px;
}

.pre {
  position: absolute;
  right: -2px;
  bottom: 0;
  padding: 0 3px;
  border-radius: 3px;
  background-color: #f5c518;
  color: #222;
  font-family: "DejaVu Sans Mono", monospace;
  font-size: 10px;
  font-weight: 700;
  line-height: 14px;
}
```
